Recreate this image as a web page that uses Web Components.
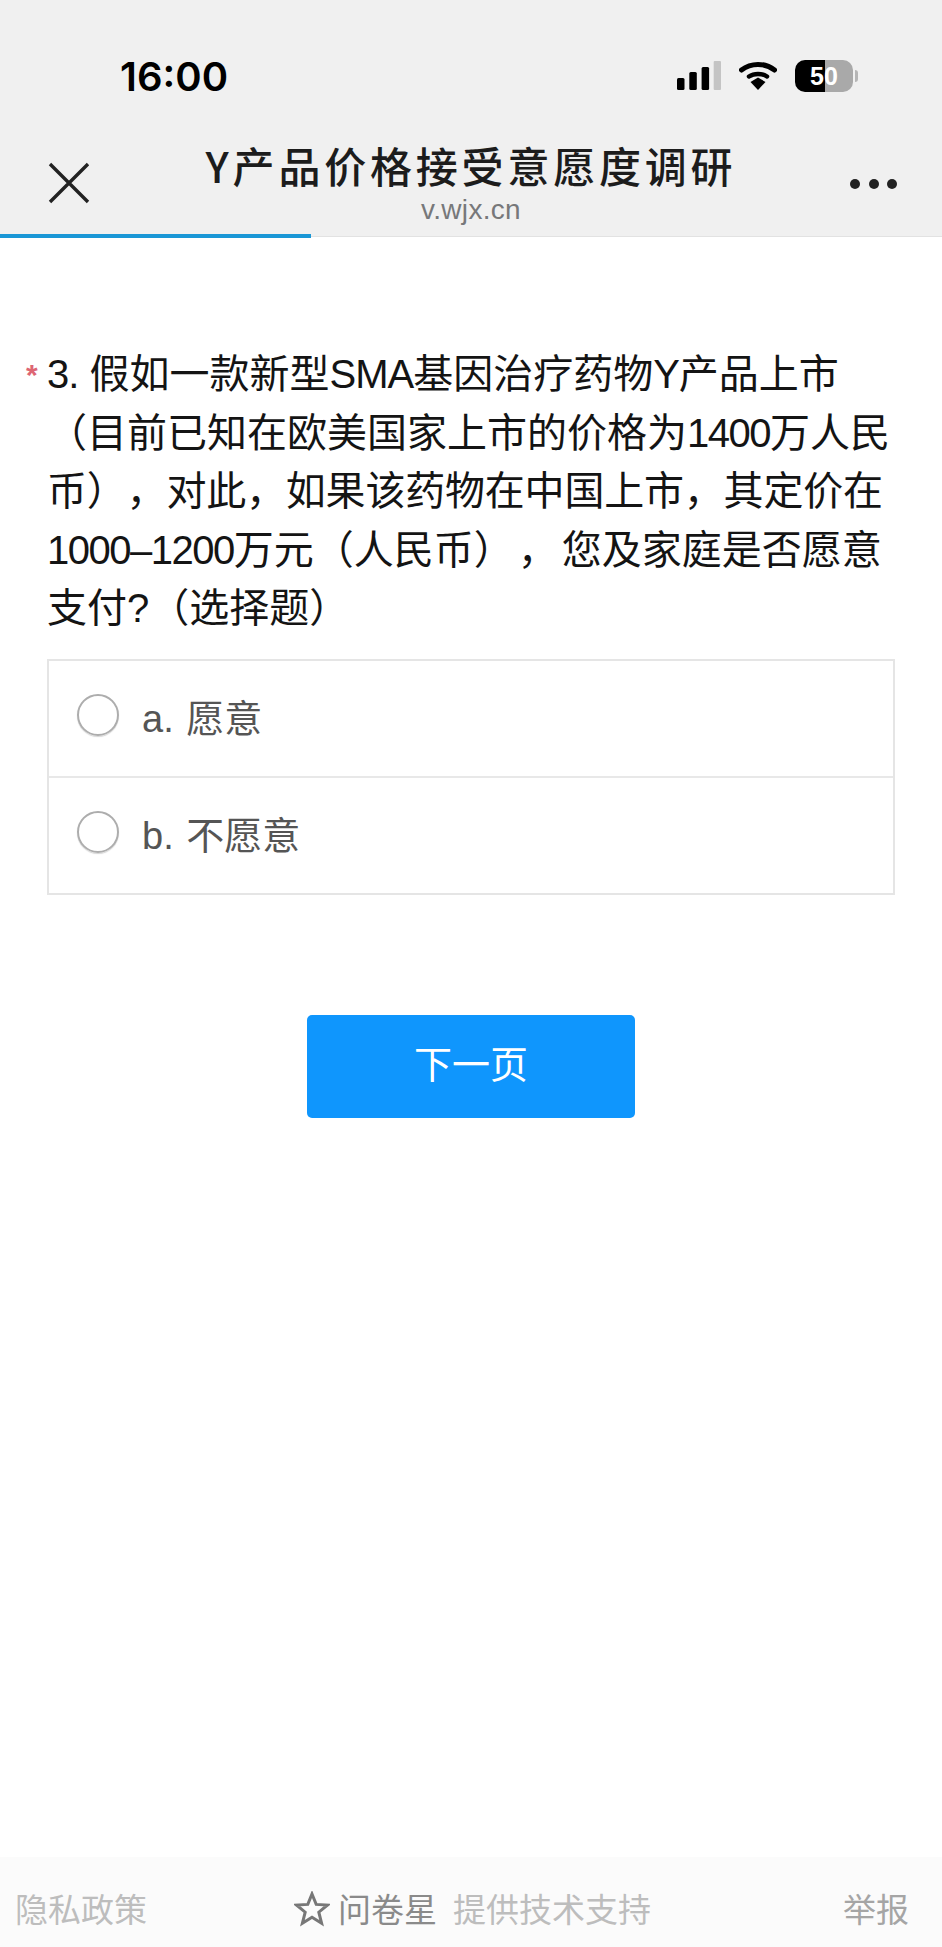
<!DOCTYPE html>
<html lang="zh">
<head>
<meta charset="utf-8">
<title>Y产品价格接受意愿度调研</title>
<style>
  html, body { margin: 0; padding: 0; background: #fff; }
  body { font-family: "Liberation Sans", "Noto Sans CJK SC", sans-serif; }
  .num { letter-spacing: -1.5px; }
  .latin { letter-spacing: -1px; }
  .tight { letter-spacing: -0.2px; }
  .wide { letter-spacing: 4px; }
</style>
</head>
<body>
<survey-page>
  <phone-status slot="top" time="16:00" level="50"></phone-status>
  <nav-bar slot="top" heading="Y产品价格接受意愿度调研" host-name="v.wjx.cn"></nav-bar>
  <progress-line slot="top" percent="33"></progress-line>

  <survey-question number="3.">假如一款新型<span class="latin">SMA</span>基因治疗药物<span class="latin">Y</span>产品上市<br>（目前已知在欧美国家上市的价格为<span class="num">1400</span>万人民<br><span class="tight">币），对此，如果该药物在中国上市，其定价在</span><br><span class="num">1000–1200</span>万元（人民币<span class="wide">），</span>您及家庭是否愿意<br>支付?（选择题）</survey-question>

  <option-list>
    <survey-option>a. 愿意</survey-option>
    <survey-option>b. 不愿意</survey-option>
  </option-list>

  <next-button>下一页</next-button>

  <survey-footer slot="bottom"></survey-footer>
</survey-page>

<script>
const SURVEY_PAGE_TEMPLATE = document.createElement('template');
SURVEY_PAGE_TEMPLATE.innerHTML = `
  <style>
    :host {
      display: flex;
      flex-direction: column;
      height: 1947px;
      overflow: hidden;
    }
    main {
      flex: 1;
      display: flex;
      flex-direction: column;
    }
  </style>
  <slot name="top"></slot>
  <main><slot></slot></main>
  <slot name="bottom"></slot>
`;

class SurveyPage extends HTMLElement {
  constructor() {
    super();
    this.attachShadow({ mode: 'open' });
    this.shadowRoot.appendChild(SURVEY_PAGE_TEMPLATE.content.cloneNode(true));
  }
}

const PHONE_STATUS_TEMPLATE = document.createElement('template');
PHONE_STATUS_TEMPLATE.innerHTML = `
  <style>
    :host {
      display: flex;
      align-items: center;
      justify-content: space-between;
      height: 76px;
      padding: 38px 84px 0 120px;
      background: #f0f0f0;
      color: #000;
    }
    .time {
      font-family: Inter, "Liberation Sans", sans-serif;
      font-size: 40px;
      font-weight: 600;
    }
    .icons {
      display: flex;
      align-items: center;
      gap: 18px;
    }
    .battery {
      position: relative;
      display: block;
      width: 58px;
      height: 32px;
      border-radius: 10px;
      background: linear-gradient(90deg, #000 0 51%, #a9a9a9 51% 100%);
      color: #fff;
      font-size: 25px;
      font-weight: 700;
      line-height: 32px;
      text-align: center;
    }
    .battery::after {
      content: '';
      position: absolute;
      left: 60px;
      top: 10px;
      width: 3px;
      height: 12px;
      border-radius: 0 3px 3px 0;
      background: #b5b5b5;
    }
    .wrap { display: flex; padding-right: 5px; }
  </style>
  <span class="time"></span>
  <div class="icons">
    <svg width="44" height="30" viewBox="0 0 44 30">
      <rect x="0" y="17" width="7.5" height="12" rx="1.5" fill="#000"/>
      <rect x="12.3" y="11" width="7.5" height="18" rx="1.5" fill="#000"/>
      <rect x="24.6" y="6" width="7.5" height="23" rx="1.5" fill="#000"/>
      <rect x="36.7" y="0" width="7.3" height="29" rx="1" fill="#c4c4c4"/>
    </svg>
    <svg width="38" height="30" viewBox="0 0 38 30">
      <path d="M2.5 9 C12 1.5, 26 1.5, 35.5 9" fill="none" stroke="#000" stroke-width="5" stroke-linecap="round"/>
      <path d="M10 15.5 C15 12, 23 12, 28 15.5" fill="none" stroke="#000" stroke-width="4.5" stroke-linecap="round"/>
      <path d="M11.5 21 L19 16.5 L26.5 21 L19 29 Z" fill="#000"/>
    </svg>
    <div class="wrap"><span class="battery"></span></div>
  </div>
`;

class PhoneStatus extends HTMLElement {
  constructor() {
    super();
    this.attachShadow({ mode: 'open' });
    this.shadowRoot.appendChild(PHONE_STATUS_TEMPLATE.content.cloneNode(true));
    this.shadowRoot.querySelector('.time').innerText = this.getAttribute('time');
    this.shadowRoot.querySelector('.battery').innerText = this.getAttribute('level');
  }
}

const NAV_BAR_TEMPLATE = document.createElement('template');
NAV_BAR_TEMPLATE.innerHTML = `
  <style>
    :host {
      display: grid;
      grid-template-columns: 120px 1fr 120px;
      height: 120px;
      background: #f0f0f0;
    }
    .close {
      padding: 48px 0 0 48px;
    }
    .titles {
      display: flex;
      flex-direction: column;
      align-items: center;
      padding-top: 25px;
    }
    h1 {
      margin: 0 0 4px;
      font-family: "Noto Sans CJK SC", sans-serif;
      font-size: 42px;
      line-height: 52px;
      font-weight: 500;
      letter-spacing: 3.8px;
      color: #1c1c1c;
      white-space: nowrap;
    }
    small {
      font-size: 28px;
      line-height: 30px;
      letter-spacing: 0.3px;
      color: #77787a;
    }
    .more {
      display: flex;
      justify-content: flex-end;
      gap: 8.5px;
      padding: 65px 45px 0 0;
    }
    .more i {
      width: 10px;
      height: 10px;
      border-radius: 50%;
      background: #222;
    }
  </style>
  <div class="close">
    <svg width="42" height="42" viewBox="0 0 42 42">
      <path d="M2 2 L40 40 M40 2 L2 40" stroke="#222" stroke-width="3.4" fill="none"/>
    </svg>
  </div>
  <div class="titles">
    <h1></h1>
    <small></small>
  </div>
  <div class="more"><i></i><i></i><i></i></div>
`;

class NavBar extends HTMLElement {
  constructor() {
    super();
    this.attachShadow({ mode: 'open' });
    this.shadowRoot.appendChild(NAV_BAR_TEMPLATE.content.cloneNode(true));
    this.shadowRoot.querySelector('h1').innerText = this.getAttribute('heading');
    this.shadowRoot.querySelector('small').innerText = this.getAttribute('host-name');
  }
}

const PROGRESS_LINE_TEMPLATE = document.createElement('template');
PROGRESS_LINE_TEMPLATE.innerHTML = `
  <style>
    :host {
      display: block;
      height: 4px;
      background: linear-gradient(#f0f0f0 0 2px, #e2e2e2 2px 3px, #fff 3px);
    }
    div {
      height: 4px;
      background: #1a97d6;
    }
  </style>
  <div></div>
`;

class ProgressLine extends HTMLElement {
  constructor() {
    super();
    this.attachShadow({ mode: 'open' });
    this.shadowRoot.appendChild(PROGRESS_LINE_TEMPLATE.content.cloneNode(true));
    this.shadowRoot.querySelector('div').style.width = this.getAttribute('percent') + '%';
  }
}

const SURVEY_QUESTION_TEMPLATE = document.createElement('template');
SURVEY_QUESTION_TEMPLATE.innerHTML = `
  <style>
    :host {
      display: block;
      position: relative;
      padding: 107px 30px 0 47px;
      font-size: 40px;
      line-height: 58.5px;
      text-spacing-trim: space-all;
      color: #141414;
      white-space: nowrap;
    }
    .number { letter-spacing: -1px; }
    .star {
      position: absolute;
      left: 26px;
      top: 108px;
      font-size: 30px;
      font-weight: 700;
      color: #dd6673;
    }
  </style>
  <span class="star">*</span>
  <span class="number"></span>
  <slot></slot>
`;

class SurveyQuestion extends HTMLElement {
  constructor() {
    super();
    this.attachShadow({ mode: 'open' });
    this.shadowRoot.appendChild(SURVEY_QUESTION_TEMPLATE.content.cloneNode(true));
    this.shadowRoot.querySelector('.number').innerText = this.getAttribute('number');
  }
}

const OPTION_LIST_TEMPLATE = document.createElement('template');
OPTION_LIST_TEMPLATE.innerHTML = `
  <style>
    :host {
      display: block;
      margin: 21px 47px 0 47px;
      border: 2px solid #e5e5e5;
      background: #fff;
    }
  </style>
  <slot></slot>
`;

class OptionList extends HTMLElement {
  constructor() {
    super();
    this.attachShadow({ mode: 'open' });
    this.shadowRoot.appendChild(OPTION_LIST_TEMPLATE.content.cloneNode(true));
  }
}

const SURVEY_OPTION_TEMPLATE = document.createElement('template');
SURVEY_OPTION_TEMPLATE.innerHTML = `
  <style>
    :host {
      display: flex;
      align-items: center;
      box-sizing: border-box;
      height: 115px;
      padding: 0 0 4px 28px;
      gap: 23px;
      font-size: 38px;
      word-spacing: 2px;
      color: #555;
    }
    :host(:not(:first-child)) {
      height: 117px;
      border-top: 2px solid #e8e8e8;
    }
    .radio {
      box-sizing: border-box;
      width: 42px;
      height: 42px;
      border: 2px solid #adadad;
      border-radius: 50%;
      box-shadow: 0 1px 1px #d5d5d5;
      margin-top: -3px;
    }
    .label { margin-top: -2px; }
  </style>
  <span class="radio"></span>
  <span class="label"><slot></slot></span>
`;

class SurveyOption extends HTMLElement {
  constructor() {
    super();
    this.attachShadow({ mode: 'open' });
    this.shadowRoot.appendChild(SURVEY_OPTION_TEMPLATE.content.cloneNode(true));
  }
}

const NEXT_BUTTON_TEMPLATE = document.createElement('template');
NEXT_BUTTON_TEMPLATE.innerHTML = `
  <style>
    :host {
      display: flex;
      justify-content: center;
      margin-top: 120px;
    }
    button {
      width: 328px;
      height: 103px;
      border: 0;
      border-radius: 5px;
      background: #0f96fd;
      color: #fff;
      font-family: inherit;
      font-size: 38px;
      padding: 0 0 10px;
    }
  </style>
  <button><slot></slot></button>
`;

class NextButton extends HTMLElement {
  constructor() {
    super();
    this.attachShadow({ mode: 'open' });
    this.shadowRoot.appendChild(NEXT_BUTTON_TEMPLATE.content.cloneNode(true));
  }
}

const SURVEY_FOOTER_TEMPLATE = document.createElement('template');
SURVEY_FOOTER_TEMPLATE.innerHTML = `
  <style>
    :host {
      display: flex;
      align-items: flex-start;
      justify-content: space-between;
      box-sizing: border-box;
      height: 90px;
      padding: 31px 33px 0 15px;
      background: #fbfbfb;
      font-size: 33px;
      line-height: 46px;
      color: #bdbdbd;
    }
    .center {
      display: flex;
      align-items: center;
      gap: 8px;
      margin-right: 45px;
    }
    .brand {
      color: #8a8a8a;
      margin-right: 8px;
    }
    .report { color: #a5a5a5; }
    svg { margin-top: -4px; }
  </style>
  <span>隐私政策</span>
  <span class="center">
    <svg width="36" height="36" viewBox="0 0 36 36">
      <path d="M18 3 L22.2 13.4 L33.5 14 L24.8 21.2 L27.6 32.2 L18 26.2 L8.4 32.2 L11.2 21.2 L2.5 14 L13.8 13.4 Z" fill="none" stroke="#777" stroke-width="3" stroke-linejoin="miter"/>
    </svg>
    <span class="brand">问卷星</span>
    <span>提供技术支持</span>
  </span>
  <span class="report">举报</span>
`;

class SurveyFooter extends HTMLElement {
  constructor() {
    super();
    this.attachShadow({ mode: 'open' });
    this.shadowRoot.appendChild(SURVEY_FOOTER_TEMPLATE.content.cloneNode(true));
  }
}

window.customElements.define('survey-page', SurveyPage);
window.customElements.define('phone-status', PhoneStatus);
window.customElements.define('nav-bar', NavBar);
window.customElements.define('progress-line', ProgressLine);
window.customElements.define('survey-question', SurveyQuestion);
window.customElements.define('option-list', OptionList);
window.customElements.define('survey-option', SurveyOption);
window.customElements.define('next-button', NextButton);
window.customElements.define('survey-footer', SurveyFooter);
</script>
</body>
</html>
